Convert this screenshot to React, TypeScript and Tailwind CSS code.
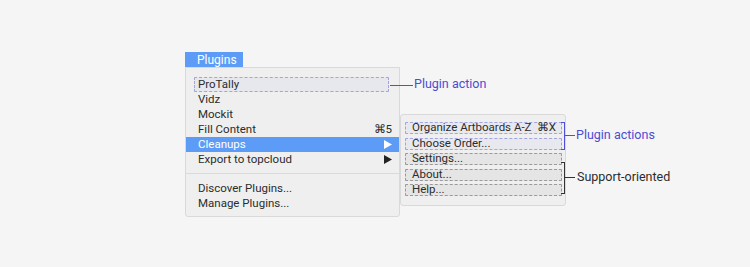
import React from "react";

const blue = "#5c9cf6";
const ink = "text-[#2c2c2c]";

type Row = { label: string; shortcut?: string; arrow?: boolean; active?: boolean; tagged?: boolean };

const mainRows: Row[] = [
  { label: "ProTally", tagged: true },
  { label: "Vidz" },
  { label: "Mockit" },
  { label: "Fill Content", shortcut: "⌘5" },
  { label: "Cleanups", arrow: true, active: true },
  { label: "Export to topcloud", arrow: true },
];

const subRows = [
  { label: "Organize Artboards A-Z", shortcut: "⌘X", kind: "action" },
  { label: "Choose Order...", kind: "action" },
  { label: "Settings...", kind: "support" },
  { label: "About...", kind: "support" },
  { label: "Help...", kind: "support" },
];

const MenuRow = ({ row }: { row: Row }) => {
  if (row.tagged) {
    return (
      <div className="relative h-[15px] pl-[8px] pr-[10px]">
        <div className="h-[15px] flex items-center pl-[3px] border border-dashed border-[#a3a3e0] bg-[#e7e7ee] rounded-[1px]">
          <span className={ink}>{row.label}</span>
        </div>
        {/* annotation */}
        <div className="absolute left-[204px] top-[8px] w-[23px] h-px bg-[#5050d6]" />
        <span className="absolute left-[228px] top-[1px] whitespace-nowrap text-[12.5px] text-[#4c4cd4]">Plugin action</span>
      </div>
    );
  }
  return (
    <div
      className={`h-[15px] flex items-center justify-between pl-[12px] pr-[7px] ${
        row.active ? "bg-[#5c9cf6] text-white" : "text-[#2c2c2c]"
      }`}
    >
      <span>{row.label}</span>
      {row.shortcut && <span>{row.shortcut}</span>}
      {row.arrow && (
        <svg width="8" height="9" viewBox="0 0 8 9">
          <path d="M0 0 L8 4.5 L0 9 Z" fill={row.active ? "#ffffff" : "#222222"} />
        </svg>
      )}
    </div>
  );
};

export default function App() {
  return (
    <div
      className="w-[750px] h-[267px] bg-[#f5f5f5] flex items-start pl-[185px] pt-[52px] text-[11.5px] leading-none"
      style={{ fontFamily: "Roboto, 'Liberation Sans', sans-serif" }}
    >
      {/* main menu */}
      <div className="w-[215px] flex flex-col">
        <div className="w-[58px] h-[15px] flex items-center pl-[12px] text-[12px] text-white" style={{ background: blue }}>
          Plugins
        </div>
        <div className="bg-[#efefef] border border-[#d9d9d9] rounded-b-[3px] pt-[9px] pb-[5px]">
          {mainRows.map((r) => (
            <MenuRow key={r.label} row={r} />
          ))}
          <div className="h-px bg-[#dadada] mt-[6px] mb-[7px]" />
          <div className="h-[15px] flex items-center pl-[12px] text-[#2c2c2c]">Discover Plugins...</div>
          <div className="h-[15px] flex items-center pl-[12px] text-[#2c2c2c]">Manage Plugins...</div>
        </div>
      </div>

      {/* submenu */}
      <div className="relative mt-[62px] w-[166px] bg-[#efefef] border border-[#d9d9d9] rounded-[3px] pl-[4px] pr-[3px] pt-[7px] pb-[9px] flex flex-col gap-[3.5px]">
        {subRows.map((r) => (
          <div
            key={r.label}
            className={`h-[12px] flex items-center justify-between pl-[6px] pr-[5px] border border-dashed rounded-[1px] text-[#2c2c2c] ${
              r.kind === "action" ? "border-[#a3a3e0] bg-[#e8e8ef]" : "border-[#9a9a9a] bg-[#e5e5e5]"
            }`}
          >
            <span>{r.label}</span>
            {r.shortcut && <span>{r.shortcut}</span>}
          </div>
        ))}

        {/* bracket: plugin actions */}
        <div className="absolute left-[160px] top-[7px] w-[4px] h-[28px] border-t border-b border-r border-[#5050d6]" />
        <div className="absolute left-[164px] top-[20px] w-[10px] h-px bg-[#5050d6]" />
        <span className="absolute left-[175px] top-[14px] whitespace-nowrap text-[12.5px] text-[#4c4cd4]">Plugin actions</span>

        {/* bracket: support */}
        <div className="absolute left-[160px] top-[47px] w-[4px] h-[32px] border-t border-b border-r border-[#333333]" />
        <div className="absolute left-[164px] top-[62px] w-[10px] h-px bg-[#333333]" />
        <span className="absolute left-[176px] top-[56px] whitespace-nowrap text-[12.5px] text-[#2c2c2c]">Support-oriented</span>
      </div>
    </div>
  );
}
